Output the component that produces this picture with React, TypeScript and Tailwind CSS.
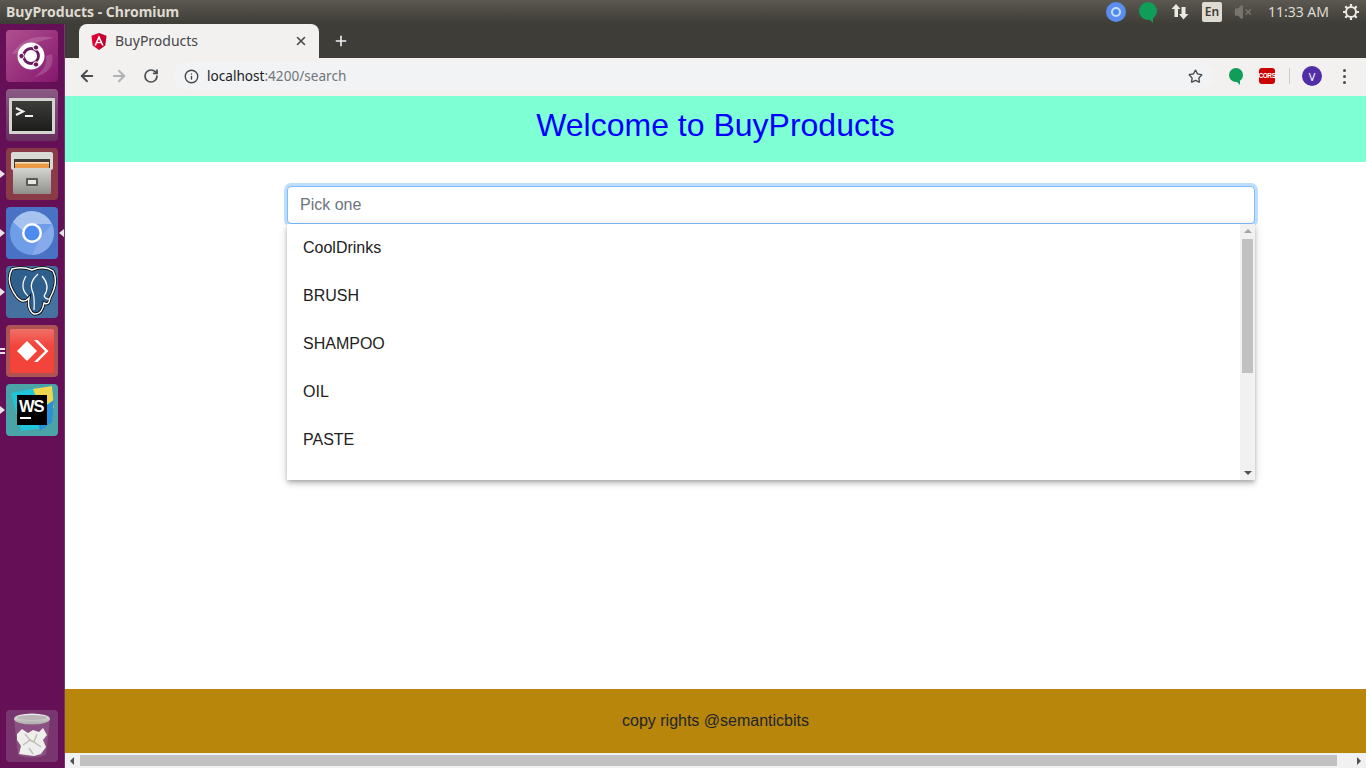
import { ArrowLeft, ArrowRight, RotateCw, Info, Star, X, Plus, VolumeX } from "lucide-react";

const options = ["CoolDrinks", "BRUSH", "SHAMPOO", "OIL", "PASTE"];

function UbuntuIcon() {
  return (
    <svg viewBox="0 0 52 52" className="h-full w-full">
      <defs>
        <linearGradient id="ub" x1="0" y1="0" x2="1" y2="1">
          <stop offset="0" stopColor="#b0508f" />
          <stop offset="1" stopColor="#85176e" />
        </linearGradient>
      </defs>
      <rect width="52" height="52" rx="4" fill="url(#ub)" />
      <path d="M6 24 Q20 2 48 8 Q32 10 22 18 Q12 24 6 24Z" fill="#ffffff" opacity=".16" />
      <path d="M46 24 Q50 42 28 47 Q42 38 40 26Z" fill="#ffffff" opacity=".16" />
      <circle cx="25" cy="26" r="13.5" fill="#fff" />
      <circle cx="25" cy="26" r="7.5" fill="none" stroke="#6b1a5d" strokeWidth="2.8" />
      <circle cx="15.5" cy="26" r="2.7" fill="#6b1a5d" stroke="#fff" strokeWidth="1" />
      <circle cx="30" cy="17.5" r="2.7" fill="#6b1a5d" stroke="#fff" strokeWidth="1" />
      <circle cx="30" cy="34.5" r="2.7" fill="#6b1a5d" stroke="#fff" strokeWidth="1" />
    </svg>
  );
}

function TerminalIcon() {
  return (
    <svg viewBox="0 0 52 52" className="h-full w-full">
      <defs>
        <linearGradient id="tb" x1="0" y1="0" x2="0" y2="1">
          <stop offset="0" stopColor="#8a5a84" />
          <stop offset="1" stopColor="#67305f" />
        </linearGradient>
        <linearGradient id="ts" x1="0" y1="0" x2="0" y2="1">
          <stop offset="0" stopColor="#3d3d3b" />
          <stop offset="1" stopColor="#1c1c1b" />
        </linearGradient>
      </defs>
      <rect width="52" height="52" rx="4" fill="url(#tb)" />
      <rect x="3" y="9" width="46" height="36" rx="1" fill="#d4d4d1" />
      <rect x="6" y="12" width="40" height="30" fill="url(#ts)" />
      <path d="M10 19 L17 22.5 L10 26" fill="none" stroke="#f2f2f2" strokeWidth="2.2" />
      <rect x="19" y="26" width="8" height="2" fill="#f2f2f2" />
    </svg>
  );
}

function FilesIcon() {
  return (
    <svg viewBox="0 0 52 52" className="h-full w-full">
      <defs>
        <linearGradient id="fb" x1="0" y1="0" x2="0" y2="1">
          <stop offset="0" stopColor="#d3d3d0" />
          <stop offset="1" stopColor="#8f8f8c" />
        </linearGradient>
      </defs>
      <rect width="52" height="52" rx="4" fill="#8b3a47" />
      <rect x="5" y="4" width="42" height="18" rx="2" fill="#d9d9d6" />
      <rect x="8" y="11" width="36" height="10" fill="#3f3a36" />
      <rect x="9" y="14" width="34" height="6" fill="#ea9a44" />
      <rect x="9" y="14" width="34" height="1.5" fill="#f8e2c0" />
      <rect x="7" y="20" width="38" height="26" rx="1" fill="url(#fb)" />
      <rect x="20" y="30" width="12" height="8" rx="1" fill="#5a5a58" />
      <rect x="22" y="32" width="8" height="4" fill="#e6e6e4" />
    </svg>
  );
}

function ChromiumIcon() {
  return (
    <svg viewBox="0 0 52 52" className="h-full w-full">
      <rect width="52" height="52" rx="4" fill="#4a72c4" />
      <circle cx="26" cy="26" r="22" fill="#6f9de8" />
      <path d="M7 15 A22 22 0 0 1 46 17 L26 17 A9 9 0 0 0 17 24Z" fill="#a6c2ef" />
      <path d="M46 17 A22 22 0 0 1 26 48 L34 31Z" fill="#86aaec" />
      <circle cx="26" cy="26" r="10" fill="#fff" />
      <circle cx="26" cy="26" r="7.5" fill="#4c8cf0" />
    </svg>
  );
}

function PostgresIcon() {
  return (
    <svg viewBox="0 0 52 52" className="h-full w-full">
      <rect width="52" height="52" rx="4" fill="#44719f" />
      <path
        d="M6 3 Q17 0 26 4 Q38 -1 47 5 Q53 16 44 32 Q43 40 38 37 Q36 49 28 48 Q21 44 23 32 Q17 39 10 30 Q-1 15 6 3Z"
        fill="#2f5f8c"
        stroke="#000"
        strokeWidth="3"
      />
      <path
        d="M6 3 Q17 0 26 4 Q38 -1 47 5 Q53 16 44 32 Q43 40 38 37 Q36 49 28 48 Q21 44 23 32 Q17 39 10 30 Q-1 15 6 3Z"
        fill="none"
        stroke="#fff"
        strokeWidth="1.5"
      />
      <path d="M20 10 Q13 22 22 30 M32 8 Q23 16 26 24 Q29 30 28 44 M36 10 Q45 20 38 30 Q40 34 44 33" fill="none" stroke="#fff" strokeWidth="1.2" />
    </svg>
  );
}

function AnyDeskIcon() {
  return (
    <svg viewBox="0 0 52 52" className="h-full w-full">
      <defs>
        <linearGradient id="ad" x1="0" y1="0" x2="0" y2="1">
          <stop offset="0" stopColor="#ef6f68" />
          <stop offset=".4" stopColor="#f4433a" />
          <stop offset="1" stopColor="#f4433a" />
        </linearGradient>
      </defs>
      <rect width="52" height="52" rx="4" fill="#ad5353" />
      <rect x="4" y="4" width="44" height="44" rx="2" fill="url(#ad)" />
      <path d="M21 16 L31 26 L21 36 L11 26Z" fill="#fff" />
      <path d="M28 15 L31.5 15 L42.5 26 L31.5 37 L28 37 L39 26Z" fill="#fff" />
    </svg>
  );
}

function WebStormIcon() {
  return (
    <svg viewBox="0 0 52 52" className="h-full w-full">
      <rect width="52" height="52" rx="4" fill="#4aa3a6" />
      <path d="M5 9 L30 4 L38 44 L15 47Z" fill="#1fc6d9" />
      <path d="M27 5 L46 2 L48 24 L36 28Z" fill="#efd84f" />
      <path d="M30 28 L48 16 L46 38 L34 47Z" fill="#2a8fd8" />
      <rect x="11" y="11" width="30" height="30" fill="#000" />
      <text x="13" y="28" fill="#fff" fontSize="16.5" fontWeight="700" letterSpacing="-1" fontFamily="Liberation Sans, sans-serif">WS</text>
      <rect x="14" y="33" width="11" height="2" fill="#fff" />
    </svg>
  );
}

function TrashIcon() {
  return (
    <svg viewBox="0 0 52 52" className="h-full w-full">
      <defs>
        <linearGradient id="rim" x1="0" y1="0" x2="0" y2="1">
          <stop offset="0" stopColor="#efefed" />
          <stop offset="1" stopColor="#a9a9a7" />
        </linearGradient>
      </defs>
      <rect width="52" height="52" rx="4" fill="#79356e" />
      <path d="M8 9 L12 45 Q26 50 40 45 L44 9Z" fill="#ffffff" opacity=".14" />
      <ellipse cx="26" cy="9" rx="18" ry="5.5" fill="url(#rim)" />
      <ellipse cx="26" cy="7.5" rx="15" ry="2.6" fill="#b9b4b6" />
      <path d="M11 24 L16 19 L22 23 L27 20 L33 22 L37 18 L41 25 L37 30 L40 37 L35 44 L28 46 L20 45 L13 44 L15 36 L11 30Z" fill="#eeeeeb" />
      <path d="M19 24 L24 30 L17 35 M31 24 L28 32 L35 37 M24 30 L28 32 M23 38 L27 44" fill="none" stroke="#bdbdba" strokeWidth="1.4" />
    </svg>
  );
}

function Launcher() {
  const items = [
    { node: <UbuntuIcon />, left: false, right: false, double: false },
    { node: <TerminalIcon />, left: false, right: false, double: false },
    { node: <FilesIcon />, left: true, right: false, double: false },
    { node: <ChromiumIcon />, left: true, right: true, double: false },
    { node: <PostgresIcon />, left: true, right: false, double: false },
    { node: <AnyDeskIcon />, left: false, right: false, double: true },
    { node: <WebStormIcon />, left: true, right: false, double: false },
  ];
  return (
    <aside className="flex w-[65px] shrink-0 flex-col justify-between border-r border-[#6e3a66] bg-[#640f56] pb-[6px] pt-[6px]">
      <div className="flex flex-col gap-[7px]">
        {items.map((item, i) => (
          <div key={i} className="relative ml-[6px] h-[52px] w-[52px]">
            {item.node}
            {item.left && (
              <span className="absolute left-[-6px] top-[22px] h-0 w-0 border-y-[4px] border-l-[5px] border-y-transparent border-l-[#e8e3e6]" />
            )}
            {item.right && (
              <span className="absolute right-[-6px] top-[22px] h-0 w-0 border-y-[4px] border-r-[5px] border-y-transparent border-r-[#e8e3e6]" />
            )}
            {item.double && (
              <span className="absolute left-[-6px] top-[23px] h-[6px] w-[5px] border-y-2 border-[#e8e3e6]" />
            )}
          </div>
        ))}
      </div>
      <div className="ml-[6px] h-[52px] w-[52px]">
        <TrashIcon />
      </div>
    </aside>
  );
}

function TopBar() {
  return (
    <div className="flex h-[24px] shrink-0 items-center justify-between bg-gradient-to-b from-[#5a5850] to-[#3f3d37] pl-[6px] pr-[6px] font-['Noto_Sans',sans-serif] text-[#dfdbd2]">
      <span className="text-[14px] font-bold leading-none">BuyProducts - Chromium</span>
      <div className="flex items-center">
        <span className="mr-[13px] flex h-[20px] w-[20px] items-center justify-center rounded-full bg-[#5b8def]">
          <span className="h-[10px] w-[10px] rounded-full border-2 border-[#c9dcf8] bg-[#4c8cf0]" />
        </span>
        <span className="relative mb-[2px] mr-[14px] h-[18px] w-[18px] rounded-full bg-[#0f9d58]">
          <span className="absolute bottom-[-3px] left-[9px] h-0 w-0 border-l-[5px] border-t-[5px] border-l-transparent border-t-[#0f9d58]" />
        </span>
        <svg viewBox="0 0 18 18" className="mr-[13px] h-[18px] w-[18px]" fill="#ebe9e3">
          <path d="M5 1 L9.5 6 H7 V14 H3.5 V6 H.5Z" />
          <path d="M12.5 16.5 L8 11 H10.5 V4 H14.5 V11 H17.5Z" />
        </svg>
        <span className="mr-[12px] flex h-[20px] w-[20px] items-center justify-center rounded-[2px] bg-[#dfdbd2] text-[12px] font-semibold leading-none text-[#3c3b37]">
          En
        </span>
        <VolumeX className="mr-[16px] h-[18px] w-[18px] text-[#77756e]" fill="#77756e" />
        <span className="mr-[13px] text-[14px] leading-none text-[#dfdbd2]">11:33 AM</span>
        <svg viewBox="0 0 18 18" className="h-[18px] w-[18px]" fill="none" stroke="#ebe9e3">
          <circle cx="9" cy="9" r="5" strokeWidth="2" />
          <path d="M9 1 V4 M9 14 V17 M1 9 H4 M14 9 H17 M3.3 3.3 L5.4 5.4 M12.6 12.6 L14.7 14.7 M3.3 14.7 L5.4 12.6 M12.6 5.4 L14.7 3.3" strokeWidth="2.2" />
        </svg>
      </div>
    </div>
  );
}

function AngularLogo() {
  return (
    <svg viewBox="0 0 16 17" className="h-[17px] w-[16px]">
      <path d="M8 0 L0.5 2.7 L1.7 12.6 L8 17Z" fill="#dd0031" />
      <path d="M8 0 L15.5 2.7 L14.3 12.6 L8 17Z" fill="#c3002f" />
      <path d="M8 2.2 L3.3 12.6 H5 L6 10.2 H10 L11 12.6 H12.7Z M8 6 L9.4 9 H6.6Z" fill="#fff" fillRule="evenodd" />
    </svg>
  );
}

function BrowserChrome() {
  return (
    <div className="shrink-0 font-['Noto_Sans',sans-serif]">
      <div className="flex h-[34px] items-end bg-[#3f3d38] pl-[14px]">
        <div className="flex h-[34px] w-[240px] items-center rounded-t-[8px] bg-[#f2f1f0] pl-[12px] pr-[11px]">
          <AngularLogo />
          <span className="ml-[8px] flex-1 pb-[2px] text-[14px] text-[#45474a]">BuyProducts</span>
          <X className="h-[14px] w-[14px] text-[#45474a]" strokeWidth={2.6} />
        </div>
        <Plus className="mb-[9px] ml-[14px] h-[16px] w-[16px] text-[#f1f3f4]" strokeWidth={2.4} />
      </div>
      <div className="flex h-[38px] items-center bg-[#f2f1f0] pb-[2px] pl-[13px] pr-[20px]">
        <ArrowLeft className="h-[18px] w-[18px] text-[#494c50]" strokeWidth={2.5} />
        <ArrowRight className="ml-[14px] h-[18px] w-[18px] text-[#b0b2b4]" strokeWidth={2.5} />
        <RotateCw className="ml-[15px] h-[16px] w-[16px] text-[#494c50]" strokeWidth={2.6} />
        <div className="ml-[14px] flex h-[28px] flex-1 items-center rounded-full bg-[#f1f3f4] pl-[11px] pr-[10px]">
          <Info className="h-[15px] w-[15px] text-[#45474a]" strokeWidth={2.2} />
          <span className="ml-[8px] flex-1 text-[13.6px] leading-none text-[#202124]">
            localhost<span className="text-[#70757a]">:4200/search</span>
          </span>
          <Star className="h-[15px] w-[15px] text-[#494c50]" strokeWidth={2.2} />
        </div>
        <span className="relative ml-[16px] mb-[2px] h-[14px] w-[14px] rounded-full bg-[#0f9d58]">
          <span className="absolute bottom-[-3px] left-[7px] h-0 w-0 border-l-[4px] border-t-[4px] border-l-transparent border-t-[#0f9d58]" />
        </span>
        <span className="ml-[16px] flex h-[16px] w-[16px] items-center justify-center rounded-[3px] bg-[#cc0000] font-['Liberation_Sans',sans-serif] text-[6.5px] font-bold leading-none tracking-[-0.4px] text-white">
          CORS
        </span>
        <span className="ml-[14px] h-[16px] w-px bg-[#c9cbcd]" />
        <span className="ml-[12px] flex h-[20px] w-[20px] items-center justify-center rounded-full bg-[#512da8] text-[11px] leading-none text-white">
          V
        </span>
        <span className="ml-[21px] flex flex-col gap-[3px]">
          <span className="h-[3px] w-[3px] rounded-full bg-[#494c50]" />
          <span className="h-[3px] w-[3px] rounded-full bg-[#494c50]" />
          <span className="h-[3px] w-[3px] rounded-full bg-[#494c50]" />
        </span>
      </div>
    </div>
  );
}

function SearchBox() {
  return (
    <div className="relative ml-[222px] mt-[24px] w-[968px]">
      <div className="flex h-[38px] items-center rounded-[4px] border border-[#80bdff] bg-white pl-[12px] shadow-[0_0_0_3px_rgba(0,123,255,0.25)]">
        <span className="text-[16px] text-[#6c757d]">Pick one</span>
      </div>
      <div className="absolute left-0 top-[38px] flex h-[256px] w-[968px] bg-white shadow-[0_2px_4px_-1px_rgba(0,0,0,0.2),0_4px_5px_0_rgba(0,0,0,0.14),0_1px_10px_0_rgba(0,0,0,0.12)]">
        <ul className="flex-1">
          {options.map((o) => (
            <li key={o} className="flex h-[48px] items-center pl-[16px] text-[16px] text-[#212121]">
              {o}
            </li>
          ))}
        </ul>
        <div className="flex w-[15px] flex-col items-center justify-between bg-[#f1f1f1]">
          <div className="flex w-full flex-col items-center">
            <span className="mt-[5px] h-0 w-0 border-x-[4px] border-b-[4px] border-x-transparent border-b-[#a3a3a3]" />
            <span className="mt-[6px] h-[134px] w-[11px] bg-[#c1c1c1]" />
          </div>
          <span className="mb-[5px] h-0 w-0 border-x-[4px] border-t-[4px] border-x-transparent border-t-[#505050]" />
        </div>
      </div>
    </div>
  );
}

export default function App() {
  return (
    <div className="flex h-[768px] w-[1366px] flex-col overflow-hidden bg-white font-['Liberation_Sans',sans-serif]">
      <TopBar />
      <div className="flex min-h-0 flex-1">
        <Launcher />
        <div className="flex min-w-0 flex-1 flex-col">
          <BrowserChrome />
          <main className="flex min-h-0 flex-1 flex-col">
            <header className="flex h-[66px] shrink-0 items-center justify-center bg-[#7fffd4] pb-[8px]">
              <h1 className="text-[32px] leading-none text-[#0000ff]">Welcome to BuyProducts</h1>
            </header>
            <div className="flex-1">
              <SearchBox />
            </div>
            <footer className="flex h-[64px] shrink-0 items-center justify-center bg-[#b8860b]">
              <span className="text-[16px] text-[#212529]">copy rights @semanticbits</span>
            </footer>
            <div className="flex h-[15px] shrink-0 items-center bg-[#f1f1f1]">
              <span className="ml-[5px] h-0 w-0 border-y-[4px] border-r-[4px] border-y-transparent border-r-[#505050]" />
              <span className="ml-[6px] h-[11px] w-[1257px] bg-[#c1c1c1]" />
              <span className="ml-auto mr-[5px] h-0 w-0 border-y-[4px] border-l-[4px] border-y-transparent border-l-[#505050]" />
            </div>
          </main>
        </div>
      </div>
    </div>
  );
}
